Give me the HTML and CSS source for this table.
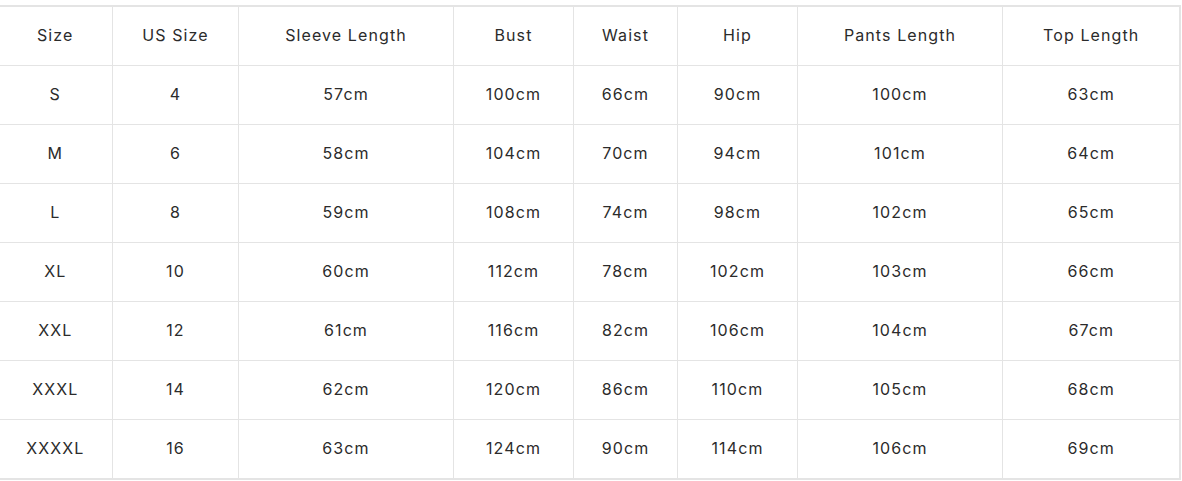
FILE: index.html
```html
<!DOCTYPE html>
<html>
<head>
<meta charset="utf-8">
<link rel="stylesheet" href="styles.css">
</head>
<body>
<table class="size-table">
  <colgroup>
    <col class="c1"><col class="c2"><col class="c3"><col class="c4"><col class="c5"><col class="c6"><col class="c7"><col class="c8">
  </colgroup>
  <tr><td>Size</td><td>US Size</td><td>Sleeve Length</td><td>Bust</td><td>Waist</td><td>Hip</td><td>Pants Length</td><td>Top Length</td></tr>
  <tr><td>S</td><td>4</td><td>57cm</td><td>100cm</td><td>66cm</td><td>90cm</td><td>100cm</td><td>63cm</td></tr>
  <tr><td>M</td><td>6</td><td>58cm</td><td>104cm</td><td>70cm</td><td>94cm</td><td>101cm</td><td>64cm</td></tr>
  <tr><td>L</td><td>8</td><td>59cm</td><td>108cm</td><td>74cm</td><td>98cm</td><td>102cm</td><td>65cm</td></tr>
  <tr><td>XL</td><td>10</td><td>60cm</td><td>112cm</td><td>78cm</td><td>102cm</td><td>103cm</td><td>66cm</td></tr>
  <tr><td>XXL</td><td>12</td><td>61cm</td><td>116cm</td><td>82cm</td><td>106cm</td><td>104cm</td><td>67cm</td></tr>
  <tr><td>XXXL</td><td>14</td><td>62cm</td><td>120cm</td><td>86cm</td><td>110cm</td><td>105cm</td><td>68cm</td></tr>
  <tr><td>XXXXL</td><td>16</td><td>63cm</td><td>124cm</td><td>90cm</td><td>114cm</td><td>106cm</td><td>69cm</td></tr>
</table>
</body>
</html>
```
FILE: styles.css
```css
html, body {
  margin: 0;
  padding: 0;
  background: #ffffff;
}
body {
  font-family: "Inter", "Open Sans", sans-serif;
  color: #2b2b2b;
  overflow: hidden;
}
.size-table {
  margin: 5px 0 0 -4px;
  width: 1183px;
  table-layout: fixed;
  border-collapse: collapse;
  border: 2px solid #e4e4e4;
}
.c1 { width: 115px; }
.c2 { width: 126px; }
.c3 { width: 215px; }
.c4 { width: 120px; }
.c5 { width: 104px; }
.c6 { width: 120px; }
.c7 { width: 205px; }
.c8 { width: 178px; }
.size-table td {
  height: 56px;
  padding: 0 0 2px 1px;
  border: 1px solid #e4e4e4;
  text-align: center;
  vertical-align: middle;
  font-size: 16px;
  letter-spacing: 1.1px;
  font-weight: 400;
}
```
